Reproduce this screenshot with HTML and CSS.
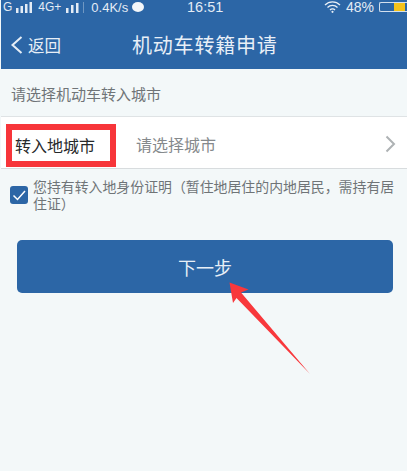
FILE: index.html
```html
<!DOCTYPE html>
<html lang="zh">
<head>
<meta charset="utf-8">
<title>机动车转籍申请</title>
<link rel="stylesheet" href="styles.css">
</head>
<body>
<div class="screen">
  <header class="top">
    <div class="status">
      <div class="status-left">
        <span class="g">G</span>
        <svg class="bars" width="16" height="11" viewBox="0 0 16 11"><path d="M0 6h2.500v5H0zM4.500 4h2.500v7H4.500zM9 2h2.500v9H9zM13.500 0H16v11h-2.500z" fill="#e4ecf5"/></svg>
        <span class="net">4G+</span>
        <svg class="bars" width="14" height="11" viewBox="0 0 14 11"><path d="M0 6h2.500v5H0zM5 3h2.500v8H5zM10 1h2.500v10H10z" fill="#e4ecf5"/></svg>
        <span class="sep"></span>
        <span class="speed">0.4K/s</span>
        <span class="bubble"></span>
      </div>
      <div class="clock">16:51</div>
      <div class="status-right">
        <svg width="17" height="12" viewBox="0 0 17 12"><path d="M1 4a10.500 10.500 0 0 1 15 0M3.500 6.500a7 7 0 0 1 10 0M6 9a3.500 3.500 0 0 1 5 0" fill="none" stroke="#e8eff7" stroke-width="1.300"/><circle cx="8.500" cy="10.800" r="1.100" fill="#e8eff7"/></svg>
        <span>48%</span>
        <span class="battery"><span class="battery-fill"></span></span>
      </div>
    </div>
    <div class="nav">
      <div class="back">
        <svg width="13" height="20" viewBox="0 0 13 20"><path d="M11.500 2 2.500 10l9 8" fill="none" stroke="#e6eef6" stroke-width="2"/></svg>
        <span>返回</span>
      </div>
      <h1>机动车转籍申请</h1>
    </div>
  </header>
  <p class="hint">请选择机动车转入城市</p>
  <div class="row">
    <span class="row-label">转入地城市</span>
    <span class="row-value">请选择城市</span>
    <svg class="chevron" width="11" height="18" viewBox="0 0 11 18"><path d="M1.500 1.500 9 9l-7.500 7.500" fill="none" stroke="#aeb2b4" stroke-width="2"/></svg>
  </div>
  <div class="agree">
    <span class="check">
      <svg width="18" height="18" viewBox="0 0 18 18"><path d="M3.500 9.500 7.500 13.500 15 5" fill="none" stroke="#fff" stroke-width="1.500"/></svg>
    </span>
    <p>您持有转入地身份证明（暂住地居住的内地居民，需持有居住证）</p>
  </div>
  <div class="action">
    <button class="next" type="button">下一步</button>
  </div>
  <svg class="arrow" width="90" height="100" viewBox="0 0 90 100"><path d="M0.500 0.500 19.500 7.500 12 10.500 81 92 7.500 16 4 21Z" fill="#f8383c"/></svg>
</div>
</body>
</html>
```
FILE: styles.css
```css
* { box-sizing: border-box; }
html, body { margin: 0; padding: 0; }
body { width: 407px; height: 471px; overflow: hidden; background: #f3f8f9; font-family: "Noto Sans CJK SC", "Liberation Sans", sans-serif; }
.screen { position: relative; width: 407px; height: 471px; padding-left: 1px; background: #f3f8f9; }
.top { background: #2c66a6; height: 69px; color: #e8eff7; }
.status { display: flex; align-items: center; height: 14px; position: relative; font-family: "Liberation Sans", sans-serif; font-size: 13px; color: #e4ecf5; }
.status-left { display: flex; align-items: center; padding-left: 2px; }
.g { font-size: 12px; }
.status-left .bars:first-of-type { margin-left: 4px; }
.net { margin: 0 5px 0 6px; font-size: 12px; }
.sep { width: 1px; height: 11px; margin-left: 3px; background: #6f97c2; }
.speed { margin-left: 7px; font-size: 13px; }
.bubble { width: 12px; height: 10px; border-radius: 50%; background: #f4f7fa; margin-left: 4px; }
.clock { position: absolute; left: 186px; top: -1px; font-size: 14.500px; }
.status-right { margin-left: auto; display: flex; align-items: center; gap: 5px; font-size: 14px; }
.battery { display: block; width: 28px; height: 10px; border: 1px solid #d3e0ee; border-right: 0; border-radius: 2px 0 0 2px; padding: 0 2px 0 14px; }
.battery-fill { display: block; height: 100%; background: #f4c21a; }
.nav { display: flex; align-items: center; height: 55px; position: relative; padding-top: 6px; }
.back { display: flex; align-items: center; gap: 5px; padding-left: 9px; font-size: 16.500px; }
.nav h1 { position: absolute; left: 131px; top: 18px; margin: 0; font-size: 20px; line-height: 26px; font-weight: 400; letter-spacing: 0.800px; white-space: nowrap; }
.hint { margin: 0; height: 48px; display: flex; align-items: center; padding: 2px 0 0 10px; font-size: 15px; color: #6f7477; border-bottom: 1px solid #dfe3e5; }
.row { display: flex; align-items: flex-end; background: #fff; height: 52px; border-bottom: 1px solid #d8dcde; position: relative; }
.row-label { width: 110px; height: 43px; margin: 0 0 1px 5px; border: 6px solid #f7353a; display: flex; align-items: center; padding: 0 0 1px 3px; white-space: nowrap; font-size: 16px; color: #26282a; }
.row-value { margin: 0 0 12px 20px; font-size: 16px; color: #85898c; }
.chevron { margin: 0 11px 15px auto; }
.agree { display: flex; align-items: center; padding: 0 0 0 9px; gap: 5px; margin-top: 9px; }
.check { flex: none; width: 18px; height: 18px; border-radius: 3px; background: #2c66a6; display: block; line-height: 0; }
.agree p { margin: 0; font-size: 13.900px; line-height: 17px; color: #6f7477; width: 364px; }
.action { padding: 28px 14px 0 16px; }
.next { display: block; width: 100%; height: 53px; border: 0; border-radius: 5px; background: #2c66a6; color: #e8eff7; font: inherit; font-size: 18px; padding: 0; }
.arrow { position: absolute; left: 229px; top: 282px; }
```
